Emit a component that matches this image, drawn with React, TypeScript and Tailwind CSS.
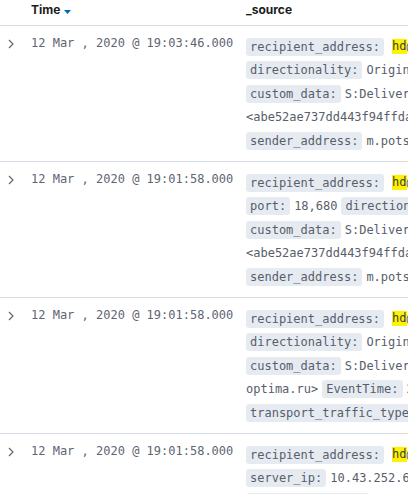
import React from "react";

type Seg = { t: "k" | "v" | "h"; s: string };
type Row = { time: string; lines: Seg[][] };

const k = (s: string): Seg => ({ t: "k", s });
const v = (s: string): Seg => ({ t: "v", s });
const h = (s: string): Seg => ({ t: "h", s });

const recip: Seg[] = [k("recipient_address:"), h("hd"), v("@optima.ru")];
const custom: Seg[] = [k("custom_data:"), v("S:DeliveredTo=hd@optima.ru;MessageId")];
const abe: Seg[] = [v("<abe52ae737dd443f94ffda81c2e0a1b3@mail.optima.ru>")];
const sender: Seg[] = [k("sender_address:"), v("m.potseluev@optima.ru")];
const direc: Seg[] = [k("directionality:"), v("Originating")];

const rows: Row[] = [
  { time: "12 Mar , 2020 @ 19:03:46.000", lines: [recip, direc, custom, abe, sender] },
  {
    time: "12 Mar , 2020 @ 19:01:58.000",
    lines: [recip, [k("port:"), v("18,680"), k("directionality:"), v("Originating")], custom, abe, sender],
  },
  {
    time: "12 Mar , 2020 @ 19:01:58.000",
    lines: [recip, direc, custom, [v("optima.ru>"), k("EventTime:"), v("2020-03-12")], [k("transport_traffic_type:"), v("Email")]],
  },
  {
    time: "12 Mar , 2020 @ 19:01:58.000",
    lines: [recip, [k("server_ip:"), v("10.43.252.61")], [k("client_hostname:"), v("mail")]],
  },
];

const mono = { fontFamily: '"DejaVu Sans Mono", "Liberation Mono", monospace' };

function Line({ segs }: { segs: Seg[] }) {
  return (
    <div className="flex items-center h-[23.5px] whitespace-nowrap">
      {segs.map((sg, i) => {
        if (sg.t === "k")
          return (
            <span key={i} className="shrink-0 h-[18px] flex items-center px-[4px] mr-[4px] rounded-[3px] bg-[#e6ebf2] text-[#585e6a]">
              {sg.s}
            </span>
          );
        if (sg.t === "h")
          return (
            <span key={i} className="shrink-0 ml-[4px] bg-[#fff200] text-[#3c3f45] leading-[15px]">
              {sg.s}
            </span>
          );
        return (
          <span key={i} className="shrink-0 mr-[4px] text-[#585e6a]">
            {sg.s}
          </span>
        );
      })}
    </div>
  );
}

export default function App() {
  return (
    <div className="w-[408px] h-[494px] overflow-hidden bg-white" style={{ fontFamily: "Inter, 'Noto Sans', sans-serif" }}>
      <div className="grid grid-cols-[31px_215px_1fr] h-[26px] border-b border-[#d3dae6] items-center">
        <div />
        <div className="flex items-center text-[12px] font-bold text-[#1a1c21] pb-[5px]">
          Time
          <svg width="7" height="4" viewBox="0 0 7 4" className="ml-[4px] mt-[3px]">
            <path d="M0 0 L7 0 L3.5 4 Z" fill="#006bb4" />
          </svg>
        </div>
        <div className="text-[12px] font-bold text-[#1a1c21] pb-[5px]">_source</div>
      </div>
      {rows.map((r, i) => (
        <div key={i} className="grid grid-cols-[31px_215px_1fr] h-[136px] border-b border-[#d3dae6] overflow-hidden">
          <div className="pl-[8px] pt-[13px]">
            <svg width="6" height="10" viewBox="0 0 6 10">
              <path d="M1 1 L5 5 L1 9" fill="none" stroke="#5a606d" strokeWidth="1.1" />
            </svg>
          </div>
          <div className="pt-[9px] text-[12px] leading-[16px] text-[#5f6571] whitespace-nowrap" style={mono}>
            {r.time}
          </div>
          <div className="pt-[9px] text-[12px] overflow-hidden" style={mono}>
            {r.lines.map((l, j) => (
              <Line key={j} segs={l} />
            ))}
          </div>
        </div>
      ))}
    </div>
  );
}
